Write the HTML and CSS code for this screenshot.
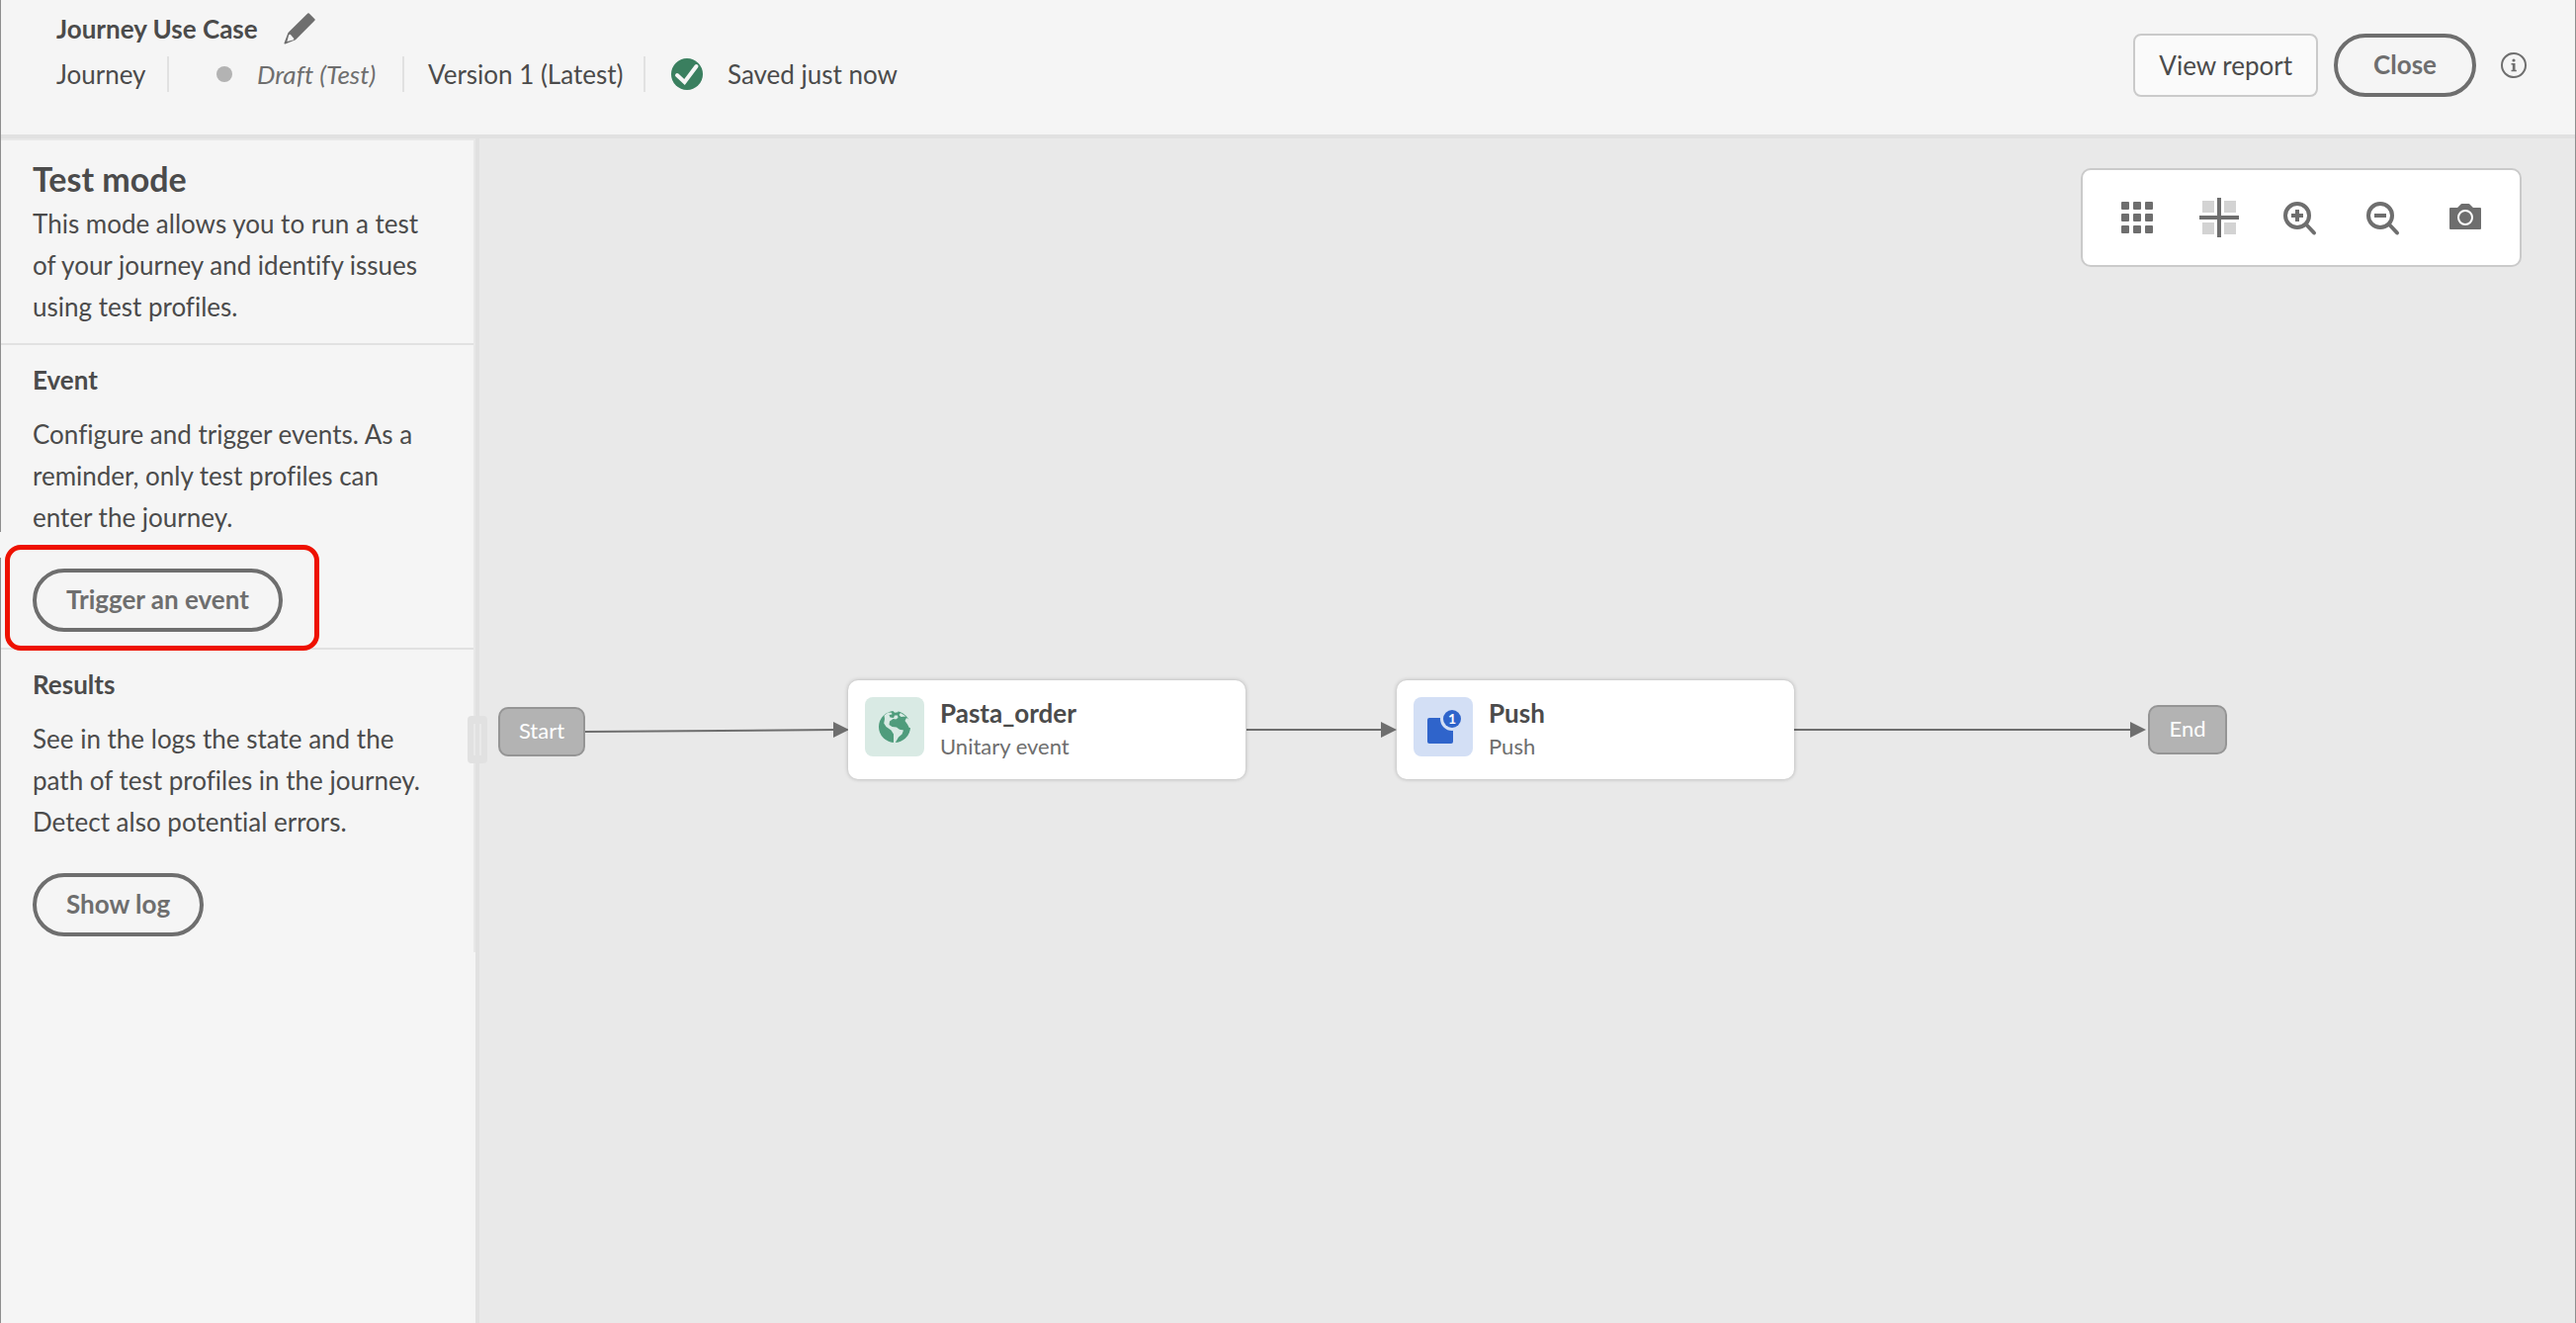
FILE: index.html
```html
<!DOCTYPE html>
<html lang="en">
<head>
<meta charset="utf-8">
<meta name="viewport" content="width=device-width, initial-scale=1.0">
<title>Journey Use Case</title>
<link rel="stylesheet" href="styles.css">
</head>

<body>
<div class="app">

<!-- Journey header -->
<header class="header">
  <div class="journey">
    <div class="title-row">
      <h1>Journey Use Case</h1>
      <button class="icon-button" aria-label="Edit name">
        <svg width="32" height="32" viewBox="0 0 32 32">
          <path d="M24.3.6a1 1 0 0 1 1.400 0l5.700 5.700a1 1 0 0 1 0 1.400L12 27.300 1.500 31.500a.8.8 0 0 1-1-1L4.500 20z" fill="#6e6e6e"/>
          <path d="M5.200 22.300l1.600-.5L10.300 26l-.3 1.300-6.600 1.800z" fill="#f5f5f5"/>
        </svg>
      </button>
    </div>
    <div class="status-row">
      <span class="type">Journey</span>
      <span class="state"><span class="dot"></span><em>Draft (Test)</em></span>
      <span class="version">Version 1 (Latest)</span>
      <span class="saved">
        <svg width="32" height="32" viewBox="0 0 32 32">
          <circle cx="16" cy="16" r="16" fill="#3a7f5f"/>
          <path d="M6 17l7.500 7L25.500 8" fill="none" stroke="#f5f5f5" stroke-width="4" stroke-linecap="round"/>
        </svg>
        Saved just now
      </span>
    </div>
  </div>
  <div class="actions">
    <button class="button">View report</button>
    <button class="pill">Close</button>
    <button class="icon-button info" aria-label="Information">
      <svg width="26" height="26" viewBox="0 0 26 26" fill="#6e6e6e">
        <circle cx="13" cy="13" r="12" fill="none" stroke="#6e6e6e" stroke-width="2"/>
        <circle cx="13" cy="8" r="1.600"/>
        <path d="M10.500 11h4v6.700h1.300v1.500h-5.300v-1.500h1.300v-5.200h-1.300z"/>
      </svg>
    </button>
  </div>
</header>

<div class="main">

<!-- Test mode panel -->
<aside class="sidebar">
  <div class="panel">
    <section class="intro">
      <h2>Test mode</h2>
      <p>This mode allows you to run a test of your journey and identify issues using test profiles.</p>
    </section>
    <section>
      <h3>Event</h3>
      <p>Configure and trigger events. As a reminder, only test profiles can enter the journey.</p>
      <div class="trigger">
        <button class="pill">Trigger an event</button>
      </div>
    </section>
    <section class="results">
      <h3>Results</h3>
      <p>See in the logs the state and the path of test profiles in the journey. Detect also potential errors.</p>
      <button class="pill">Show log</button>
    </section>
  </div>
  <div class="handle"></div>
</aside>

<!-- Journey canvas -->
<main class="canvas">
  <div class="toolbar">
    <button class="icon-button" aria-label="Grid">
      <svg width="40" height="40" viewBox="0 0 40 40" fill="#6e6e6e">
        <rect x="4" y="4" width="8" height="8" rx="1"/><rect x="16" y="4" width="8" height="8" rx="1"/><rect x="28" y="4" width="8" height="8" rx="1"/>
        <rect x="4" y="16" width="8" height="8" rx="1"/><rect x="16" y="16" width="8" height="8" rx="1"/><rect x="28" y="16" width="8" height="8" rx="1"/>
        <rect x="4" y="28" width="8" height="8" rx="1"/><rect x="16" y="28" width="8" height="8" rx="1"/><rect x="28" y="28" width="8" height="8" rx="1"/>
      </svg>
    </button>
    <button class="icon-button" aria-label="Center">
      <svg width="40" height="40" viewBox="0 0 40 40">
        <path d="M3 3h12v12H3zM25 3h12v12H25zM3 25h12v12H3zM25 25h12v12H25z" fill="#d3d3d3"/>
        <path d="M20 0v40M0 20h40" stroke="#6e6e6e" stroke-width="4"/>
      </svg>
    </button>
    <button class="icon-button" aria-label="Zoom in">
      <svg width="40" height="40" viewBox="0 0 40 40" fill="none" stroke="#6e6e6e" stroke-width="4">
        <circle cx="16" cy="18" r="12"/>
        <path d="M25 27l8 8.500" stroke-linecap="round"/>
        <path d="M16 12v12M10 18h12"/>
      </svg>
    </button>
    <button class="icon-button" aria-label="Zoom out">
      <svg width="40" height="40" viewBox="0 0 40 40" fill="none" stroke="#6e6e6e" stroke-width="4">
        <circle cx="17" cy="18" r="12"/>
        <path d="M26 27l8 8.500" stroke-linecap="round"/>
        <path d="M11 18h12"/>
      </svg>
    </button>
    <button class="icon-button" aria-label="Screenshot">
      <svg width="40" height="40" viewBox="0 0 40 40">
        <path d="M5 10h7l3.500-3.500a2 2 0 0 1 1-.5h7a2 2 0 0 1 1 .5L28 10h7a1 1 0 0 1 1 1v20a1 1 0 0 1-1 1H5a1 1 0 0 1-1-1V11a1 1 0 0 1 1-1z" fill="#6e6e6e"/>
        <circle cx="20" cy="20" r="7" fill="none" stroke="#fff" stroke-width="2"/>
      </svg>
    </button>
  </div>

  <svg class="links" width="1800" height="700" viewBox="0 0 1800 700">
    <g stroke="#6e6e6e" stroke-width="2">
      <path d="M107 600L360 598M776 598h138M1330 598h342"/>
    </g>
    <path d="M358 590l16 8-16 8zM912 590l16 8-16 8zM1670 590l16 8-16 8z" fill="#6e6e6e"/>
  </svg>

  <div class="terminal start">Start</div>

  <div class="node order">
    <div class="node-icon event">
      <svg width="32" height="32" viewBox="0 0 32 32">
        <circle cx="16" cy="16" r="16" fill="#4f9c7c"/>
        <path d="M9.500 1.500L5.500 4.500 6 8l-.8 4.500 2.300 3.500 5 3.500 2.500 4V32.500h1.500l3.500-6 3.500-3 1.500-4-4-.8-3-2.200-4.500-.5-3-2 .5-3.500 3.500-2.500 5 .8L17 8.500 19.500 7 19 4.500h-3L15 7l-3.500-.5-1-2.500 3-.5L13 1.800z" fill="#d9eae4"/>
        <path d="M14.500 0l1.500 1.800 3.500-.5V0zM22 2l-1.500 2 2 2 5-.5zM28 7l-1.500 3 2.500 3.500 1.800 3.500H33V10z" fill="#d9eae4"/>
      </svg>
    </div>
    <div>
      <strong>Pasta_order</strong>
      <span>Unitary event</span>
    </div>
  </div>

  <div class="node push">
    <div class="node-icon action">
      <svg width="36" height="36" viewBox="0 0 36 36">
        <rect x="2" y="9" width="26" height="26" rx="2" fill="#2f64cb"/>
        <circle cx="27" cy="10" r="12" fill="#d3dff5"/>
        <circle cx="27" cy="10" r="9" fill="#2f64cb"/>
        <text class="count" x="27" y="15" text-anchor="middle">1</text>
      </svg>
    </div>
    <div>
      <strong>Push</strong>
      <span>Push</span>
    </div>
  </div>

  <div class="terminal end">End</div>
</main>

</div>
</div>
</body>
</html>
```
FILE: styles.css
```css
*, *::before, *::after {
  box-sizing: border-box;
}

body {
  margin: 0;
  background-color: #f5f5f5;
  color: #4b4b4b;
  font-family: Lato, "Liberation Sans", sans-serif;
  font-size: 26px;
  font-variant-ligatures: no-common-ligatures;
  line-height: 42px;
}

h1, h2, h3, p {
  margin: 0;
}

h1, h3 {
  font-size: 26px;
}

h2 {
  font-size: 34px;
}

svg {
  display: block;
}

.app {
  display: flex;
  flex-direction: column;
  min-height: 100vh;
  border-left: 1px solid #8e8e8e;
  border-right: 1px solid #8e8e8e;
}

/* Header */
.header {
  display: flex;
  justify-content: space-between;
  align-items: flex-start;
  height: 140px;
  padding: 8px 49px 0 56px;
  border-bottom: 4px solid #e1e1e1;
}

.title-row {
  display: flex;
  align-items: center;
  gap: 26px;
}

.status-row {
  display: flex;
  align-items: center;
  margin-top: 7px;
  line-height: 36px;
  white-space: nowrap;
}

.status-row > span {
  display: flex;
  align-items: center;
}

.status-row > span + span {
  border-left: 2px solid #e1e1e1;
}

.type {
  width: 112px;
}

.state {
  width: 238px;
  padding-left: 48px;
  gap: 25px;
  color: #6e6e6e;
}

.version {
  width: 244px;
  padding-left: 24px;
}

.saved {
  padding-left: 26px;
  gap: 25px;
}

.dot {
  width: 16px;
  height: 16px;
  border-radius: 50%;
  background-color: #b3b3b3;
}

.actions {
  display: flex;
  align-items: center;
  gap: 16px;
  margin-top: 26px;
}

/* Buttons */
button {
  color: inherit;
  font: inherit;
  cursor: pointer;
}

.icon-button {
  padding: 0;
  border: none;
  background: none;
}

.info {
  margin-left: 9px;
}

.button {
  height: 64px;
  padding: 0 24px;
  border: 2px solid #cacaca;
  border-radius: 8px;
  background-color: #fafafa;
}

.pill {
  height: 64px;
  padding: 0 30px 2px;
  border: 4px solid #6e6e6e;
  border-radius: 32px;
  background: none;
  color: #6e6e6e;
  font-weight: bold;
}

.actions .pill {
  padding: 0 36px 2px;
}

/* Test mode panel */
.main {
  display: flex;
  flex: 1;
}

.sidebar {
  position: relative;
  flex: none;
  width: 484px;
  border-right: 4px solid #e1e1e1;
}

.panel {
  border-top: 2px solid #e8e8e8;
  border-right: 2px solid #e8e8e8;
}

.panel section {
  padding: 14px 48px 16px 32px;
}

.panel section + section {
  border-top: 2px solid #e1e1e1;
}

.panel .intro {
  padding-top: 18px;
}

h2 + p {
  margin-top: 3px;
}

h3 + p {
  margin-top: 13px;
}

.trigger {
  position: relative;
  margin-top: 31px;
  height: 64px;
}

/* Red frame drawn round the trigger button */
.trigger::after {
  content: "";
  position: absolute;
  left: -28px;
  top: -24px;
  width: 318px;
  height: 107px;
  border: 5px solid #ee1100;
  border-radius: 16px;
  pointer-events: none;
}

/* Break in the window edge above the frame */
.trigger::before {
  content: "";
  position: absolute;
  left: -33px;
  top: -37px;
  width: 1px;
  height: 26px;
  background-color: #f5f5f5;
}

.results .pill {
  margin-top: 31px;
}

.handle {
  position: absolute;
  right: -12px;
  top: 584px;
  z-index: 1;
  width: 20px;
  height: 48px;
  border: 6px solid #e1e1e1;
  border-top-width: 8px;
  border-bottom-width: 8px;
  border-radius: 4px;
  background: linear-gradient(90deg, #e9e9e9 2px, #e1e1e1 2px 6px, #e9e9e9 6px);
}

/* Canvas */
.canvas {
  position: relative;
  flex: 1;
  overflow: hidden;
  background-color: #e9e9e9;
}

.toolbar {
  display: flex;
  gap: 43px;
  width: fit-content;
  margin: 30px 54px 0 auto;
  padding: 28px 35px;
  border: 2px solid #cacaca;
  border-radius: 10px;
  background-color: #fff;
}

.links {
  position: absolute;
  left: 0;
  top: 0;
}

.terminal {
  position: absolute;
  height: 50px;
  border: 2px solid #959595;
  border-radius: 10px;
  background-color: #b3b3b3;
  color: #fff;
  font-size: 22px;
  line-height: 44px;
  text-align: center;
}

.start {
  left: 19px;
  top: 575px;
  width: 88px;
}

.end {
  left: 1688px;
  top: 573px;
  width: 80px;
}

.node {
  position: absolute;
  top: 548px;
  display: flex;
  gap: 16px;
  width: 402px;
  height: 100px;
  padding: 17px;
  border-radius: 10px;
  background-color: #fff;
  box-shadow: 0 0 4px rgba(0, 0, 0, 0.25);
}

.order {
  left: 373px;
}

.push {
  left: 928px;
}

.node-icon {
  display: flex;
  align-items: center;
  justify-content: center;
  width: 60px;
  height: 60px;
  border-radius: 8px;
}

.event {
  background-color: #d9eae4;
}

.action {
  background-color: #d3dff5;
}

.node strong,
.node span {
  display: block;
  line-height: 33px;
}

.node span {
  color: #6e6e6e;
  font-size: 22px;
}

.count {
  fill: #fff;
  font-size: 14px;
  font-weight: bold;
}
```
